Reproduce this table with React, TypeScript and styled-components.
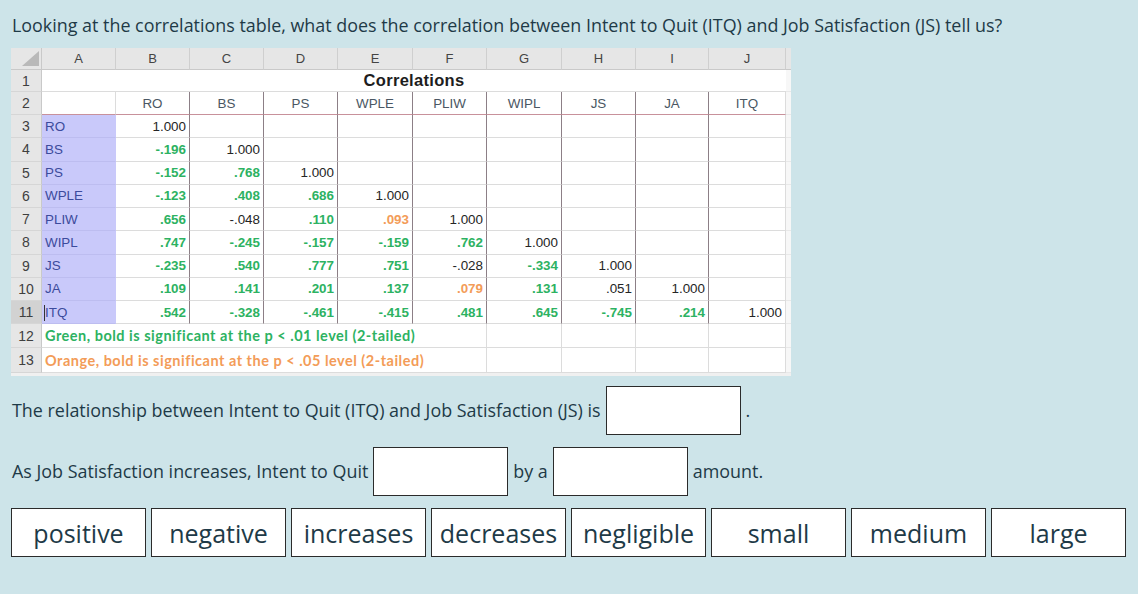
import React from "react";
import styled, { createGlobalStyle } from "styled-components";

const GlobalStyle = createGlobalStyle`
  html, body { margin: 0; padding: 0; background: #cde4e9; }
  body { font-family: "Open Sans", "Noto Sans", sans-serif; color: #1e3a47; }
`;

const Page = styled.div`
  padding: 13px 11px 0 11px;
  width: 1138px;
  height: 594px;
  box-sizing: border-box;
`;

const Question = styled.div`
  font-size: 17.9px;
  line-height: 24px;
  padding-left: 1px;
  margin-bottom: 11px;
  white-space: nowrap;
`;

const Sheet = styled.div`
  display: grid;
  grid-template-columns: 31px 74px 74px 74px 74px 75px 74px 75px 74px 73px 77px 5px;
  grid-template-rows: 22px 22px 23px repeat(9, 23.25px) 24px 25px 3px;
  width: 780px;
  background: #ffffff;
  font-family: "Liberation Sans", Arial, sans-serif;
  font-size: 13.4px;
  margin-bottom: 10px;
`;

const Corner = styled.div`
  background: #e6e6e6;
  border-right: 1px solid #c9c9c9;
  border-bottom: 1px solid #c9c9c9;
  display: flex;
  align-items: flex-end;
  justify-content: flex-end;
  padding: 0 2px 3px 0;
  box-sizing: border-box;
`;

const ColHead = styled.div`
  background: #e6e6e6;
  color: #444444;
  font-size: 13px;
  display: flex;
  align-items: center;
  justify-content: center;
  border-right: 1px solid #cfcfcf;
  border-bottom: 1px solid #c9c9c9;
  box-sizing: border-box;
`;

const RowHead = styled.div<{ $active?: boolean }>`
  background: ${(p) => (p.$active ? "#d2d2d2" : "#e6e6e6")};
  color: #3f3f3f;
  font-size: 14px;
  display: flex;
  align-items: center;
  justify-content: center;
  border-right: 1px solid #c9c9c9;
  border-bottom: 1px solid #d6d6d6;
  box-sizing: border-box;
`;

type Tone = "g" | "o" | "k";

const toneColor: Record<Tone, string> = {
  g: "#2db262",
  o: "#f39c58",
  k: "#252525",
};

const Cell = styled.div<{
  $tone?: Tone;
  $align?: "left" | "right" | "center";
  $lav?: boolean;
  $dark?: boolean;
  $red?: boolean;
  $label?: boolean;
  $head?: boolean;
}>`
  position: relative;
  background: ${(p) => (p.$lav ? "#c9c9fa" : "#ffffff")};
  color: ${(p) => (p.$label ? "#3c4b9c" : p.$head ? "#4a5763" : toneColor[p.$tone || "k"])};
  font-weight: ${(p) => (p.$tone === "g" || p.$tone === "o" ? 700 : 400)};
  display: flex;
  align-items: center;
  justify-content: ${(p) =>
    p.$align === "left" ? "flex-start" : p.$align === "center" ? "center" : "flex-end"};
  padding: 0 3px 0 3px;
  box-sizing: border-box;
  white-space: nowrap;
  border-right: 1px solid ${(p) => (p.$dark ? "#8c7f86" : p.$lav ? "#c9c9fa" : "#dcdcdc")};
  border-bottom: 1px solid ${(p) => (p.$red ? "#c8919b" : p.$lav ? "#bdbdf0" : "#dcdcdc")};
`;

const Caret = styled.span`
  position: absolute;
  left: 2px;
  top: 4px;
  width: 1px;
  height: 16px;
  background: #333;
`;

const Title = styled.div`
  grid-column: 2 / span 10;
  background: #ffffff;
  display: flex;
  align-items: center;
  justify-content: center;
  font-weight: 700;
  font-size: 16.5px;
  letter-spacing: 0.3px;
  color: #1d1d1d;
  border-bottom: 1px solid #dcdcdc;
  box-sizing: border-box;
`;

const Note = styled.div<{ $tone: Tone }>`
  grid-column: 2 / span 6;
  background: #ffffff;
  display: flex;
  align-items: center;
  padding-left: 3px;
  font-family: "Lato", "Noto Sans", sans-serif;
  font-weight: 700;
  font-size: 14.5px;
  letter-spacing: 0.5px;
  color: ${(p) => toneColor[p.$tone]};
  white-space: nowrap;
  border-right: 1px solid #dcdcdc;
  border-bottom: 1px solid #dcdcdc;
  box-sizing: border-box;
`;

const Strip = styled.div<{ $head?: boolean }>`
  background: ${(p) => (p.$head ? "#e6e6e6" : "#f7f7f7")};
  border-bottom: 1px solid ${(p) => (p.$head ? "#c9c9c9" : "#e8e8e8")};
  box-sizing: border-box;
`;

const Foot = styled.div`
  grid-column: 1 / span 12;
  background: #f0f0f0;
`;

const SentenceRow = styled.div<{ $gapAfter: number }>`
  display: flex;
  align-items: center;
  gap: 5px;
  height: 48px;
  margin-bottom: ${(p) => p.$gapAfter}px;
  font-size: 17.9px;
  padding-left: 1px;
`;

const Words = styled.span`
  white-space: nowrap;
`;

const DropZone = styled.span<{ $w: number }>`
  display: inline-block;
  width: ${(p) => p.$w}px;
  height: 49px;
  box-sizing: border-box;
  background: #ffffff;
  border: 1px solid #2b2b2b;
`;

const Tiles = styled.div`
  display: flex;
  gap: 5px;
`;

const Tile = styled.div`
  width: 135px;
  height: 49px;
  box-sizing: border-box;
  background: #ffffff;
  border: 1px solid #2b2b2b;
  display: flex;
  align-items: center;
  justify-content: center;
  font-size: 25px;
  color: #1e3a47;
  white-space: nowrap;
`;

const cols = ["A", "B", "C", "D", "E", "F", "G", "H", "I", "J"];
const heads = ["RO", "BS", "PS", "WPLE", "PLIW", "WIPL", "JS", "JA", "ITQ"];

const data: [string, [string, Tone][]][] = [
  ["RO", [["1.000", "k"]]],
  ["BS", [["-.196", "g"], ["1.000", "k"]]],
  ["PS", [["-.152", "g"], [".768", "g"], ["1.000", "k"]]],
  ["WPLE", [["-.123", "g"], [".408", "g"], [".686", "g"], ["1.000", "k"]]],
  ["PLIW", [[".656", "g"], ["-.048", "k"], [".110", "g"], [".093", "o"], ["1.000", "k"]]],
  ["WIPL", [[".747", "g"], ["-.245", "g"], ["-.157", "g"], ["-.159", "g"], [".762", "g"], ["1.000", "k"]]],
  ["JS", [["-.235", "g"], [".540", "g"], [".777", "g"], [".751", "g"], ["-.028", "k"], ["-.334", "g"], ["1.000", "k"]]],
  ["JA", [[".109", "g"], [".141", "g"], [".201", "g"], [".137", "g"], [".079", "o"], [".131", "g"], [".051", "k"], ["1.000", "k"]]],
  ["ITQ", [[".542", "g"], ["-.328", "g"], ["-.461", "g"], ["-.415", "g"], [".481", "g"], [".645", "g"], ["-.745", "g"], [".214", "g"], ["1.000", "k"]]],
];

const tiles = ["positive", "negative", "increases", "decreases", "negligible", "small", "medium", "large"];

function SelectAll() {
  return (
    <svg width="17" height="15" viewBox="0 0 17 15">
      <polygon points="17,0 17,15 0,15" fill="#b9b9b9" />
    </svg>
  );
}

export default function App() {
  return (
    <>
      <GlobalStyle />
      <Page>
        <Question>
          Looking at the correlations table, what does the correlation between Intent to Quit (ITQ) and Job Satisfaction (JS) tell us?
        </Question>

        <Sheet>
          <Corner>
            <SelectAll />
          </Corner>
          {cols.map((c) => (
            <ColHead key={c}>{c}</ColHead>
          ))}
          <Strip $head />

          <RowHead>1</RowHead>
          <Title>Correlations</Title>
          <Strip />

          <RowHead>2</RowHead>
          <Cell $red />
          {heads.map((h, i) => (
            <Cell key={h} $head $align="center" $red $dark={i < 8}>
              {h}
            </Cell>
          ))}
          <Strip />

          {data.map(([label, vals], r) => (
            <React.Fragment key={label}>
              <RowHead $active={r === 8}>{r + 3}</RowHead>
              <Cell $lav $label $align="left">
                {r === 8 && <Caret />}
                {label}
              </Cell>
              {Array.from({ length: 9 }).map((_, c) => {
                const v = vals[c];
                return (
                  <Cell key={c} $tone={v ? v[1] : "k"} $dark={c < 8}>
                    {v ? v[0] : ""}
                  </Cell>
                );
              })}
              <Strip />
            </React.Fragment>
          ))}

          <RowHead>12</RowHead>
          <Note $tone="g">Green, bold is significant at the p &lt; .01 level (2-tailed)</Note>
          <Cell />
          <Cell />
          <Cell />
          <Cell />
          <Strip />

          <RowHead>13</RowHead>
          <Note $tone="o">Orange, bold is significant at the p &lt; .05 level (2-tailed)</Note>
          <Cell />
          <Cell />
          <Cell />
          <Cell />
          <Strip />

          <Foot />
        </Sheet>

        <SentenceRow $gapAfter={13}>
          <Words>The relationship between Intent to Quit (ITQ) and Job Satisfaction (JS) is</Words>
          <DropZone $w={135} />
          <Words>.</Words>
        </SentenceRow>

        <SentenceRow $gapAfter={13}>
          <Words>As Job Satisfaction increases, Intent to Quit</Words>
          <DropZone $w={135} />
          <Words>by a</Words>
          <DropZone $w={135} />
          <Words>amount.</Words>
        </SentenceRow>

        <Tiles>
          {tiles.map((t) => (
            <Tile key={t}>{t}</Tile>
          ))}
        </Tiles>
      </Page>
    </>
  );
}
